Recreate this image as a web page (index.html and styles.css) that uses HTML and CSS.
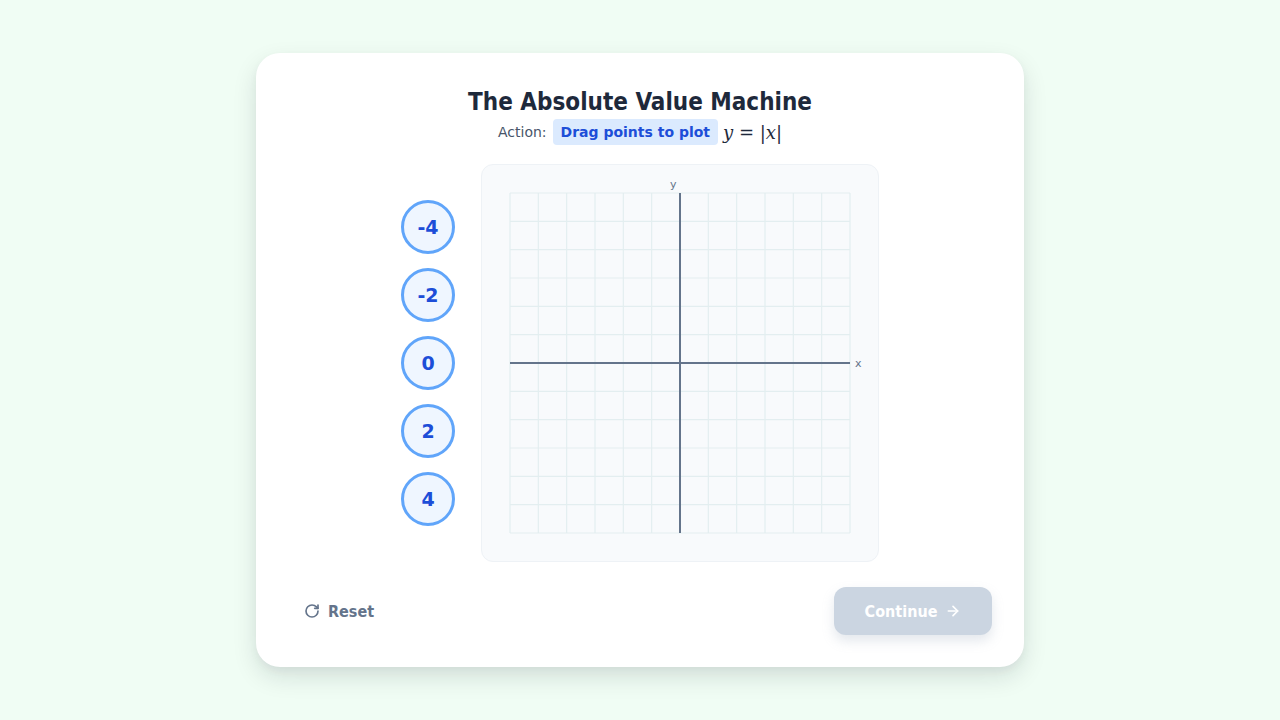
FILE: index.html
```html
<!DOCTYPE html>
<html>
<head>
<meta charset="utf-8">
<link rel="stylesheet" href="styles.css">
</head>
<body>
<div class="page">
  <div class="card">
    <h1 class="title">The Absolute Value Machine</h1>
    <div class="subtitle">
      <span class="action-label">Action:</span>
      <span class="badge">Drag points to plot</span>
      <span class="math"><i>y</i> = |<i>x</i>|</span>
    </div>
    <div class="main">
      <div class="points">
        <div class="point">-4</div>
        <div class="point">-2</div>
        <div class="point">0</div>
        <div class="point">2</div>
        <div class="point">4</div>
      </div>
      <div class="graph">
        <svg width="396" height="396" viewBox="0 0 396 396">
          <g stroke="#e3eef0" stroke-width="1.2">
            <line x1="28" y1="28" x2="28" y2="368"/>
            <line x1="56.33" y1="28" x2="56.33" y2="368"/>
            <line x1="84.67" y1="28" x2="84.67" y2="368"/>
            <line x1="113" y1="28" x2="113" y2="368"/>
            <line x1="141.33" y1="28" x2="141.33" y2="368"/>
            <line x1="169.67" y1="28" x2="169.67" y2="368"/>
            <line x1="226.33" y1="28" x2="226.33" y2="368"/>
            <line x1="254.67" y1="28" x2="254.67" y2="368"/>
            <line x1="283" y1="28" x2="283" y2="368"/>
            <line x1="311.33" y1="28" x2="311.33" y2="368"/>
            <line x1="339.67" y1="28" x2="339.67" y2="368"/>
            <line x1="368" y1="28" x2="368" y2="368"/>
            <line x1="28" y1="28" x2="368" y2="28"/>
            <line x1="28" y1="56.33" x2="368" y2="56.33"/>
            <line x1="28" y1="84.67" x2="368" y2="84.67"/>
            <line x1="28" y1="113" x2="368" y2="113"/>
            <line x1="28" y1="141.33" x2="368" y2="141.33"/>
            <line x1="28" y1="169.67" x2="368" y2="169.67"/>
            <line x1="28" y1="226.33" x2="368" y2="226.33"/>
            <line x1="28" y1="254.67" x2="368" y2="254.67"/>
            <line x1="28" y1="283" x2="368" y2="283"/>
            <line x1="28" y1="311.33" x2="368" y2="311.33"/>
            <line x1="28" y1="339.67" x2="368" y2="339.67"/>
            <line x1="28" y1="368" x2="368" y2="368"/>
          </g>
          <g stroke="#64748b" stroke-width="2">
            <line x1="198" y1="28" x2="198" y2="368"/>
            <line x1="28" y1="198" x2="368" y2="198"/>
          </g>
          <text x="188" y="23" class="axis-label">y</text>
          <text x="373" y="202" class="axis-label">x</text>
        </svg>
      </div>
    </div>
    <div class="footer">
      <button class="reset">
        <svg width="16" height="16" viewBox="0 0 24 24" fill="none" stroke="currentColor" stroke-width="2.5" stroke-linecap="round" stroke-linejoin="round"><path d="M21 12a9 9 0 1 1-9-9c2.52 0 4.93 1 6.74 2.74L21 8"/><path d="M21 3v5h-5"/></svg>
        <span>Reset</span>
      </button>
      <button class="continue">
        <span>Continue</span>
        <svg width="16" height="16" viewBox="0 0 24 24" fill="none" stroke="currentColor" stroke-width="2.5" stroke-linecap="round" stroke-linejoin="round"><path d="M5 12h14"/><path d="m12 5 7 7-7 7"/></svg>
      </button>
    </div>
  </div>
</div>
</body>
</html>
```
FILE: styles.css
```css
* { box-sizing: border-box; }
html, body { margin: 0; padding: 0; }
body {
  background: #f0fdf4;
  font-family: "DejaVu Sans", Verdana, sans-serif;
  width: 1280px;
  height: 720px;
  overflow: hidden;
}
.page {
  height: 720px;
  display: flex;
  align-items: center;
  justify-content: center;
}
.card {
  width: 768px;
  height: 614px;
  background: #ffffff;
  border-radius: 24px;
  box-shadow: 0 10px 25px rgba(15, 23, 42, 0.12), 0 4px 8px rgba(15, 23, 42, 0.04);
  padding: 32px;
  display: flex;
  flex-direction: column;
  align-items: center;
}
.title {
  margin: 0;
  padding-top: 2px;
  font-family: "DejaVu Sans Condensed", "DejaVu Sans", sans-serif;
  font-stretch: condensed;
  font-size: 24px;
  line-height: 30px;
  font-weight: bold;
  color: #1e293b;
}
.subtitle {
  margin-top: 2px;
  height: 26px;
  display: flex;
  align-items: center;
  gap: 6px;
  font-size: 14px;
  color: #475569;
}
.badge {
  background: #dbeafe;
  color: #1d4ed8;
  font-weight: bold;
  padding: 0 8px;
  height: 26px;
  line-height: 26px;
  border-radius: 4px;
}
.math {
  font-family: "DejaVu Serif", "Liberation Serif", serif;
  font-size: 18px;
  color: #1e293b;
  margin-left: -1px;
}
.math i { font-style: italic; }
.main {
  margin-top: 19px;
  display: flex;
  align-items: center;
  gap: 26px;
}
.points {
  display: flex;
  flex-direction: column;
  gap: 14px;
}
.point {
  width: 54px;
  height: 54px;
  border-radius: 50%;
  border: 3px solid #60a5fa;
  background: #eff6ff;
  color: #1d4ed8;
  font-weight: bold;
  font-size: 19px;
  display: flex;
  align-items: center;
  justify-content: center;
}
.graph {
  width: 398px;
  height: 398px;
  background: #f8fafc;
  border: 1px solid #eef2f6;
  border-radius: 12px;
}
.graph svg { display: block; }
.axis-label {
  font-family: "DejaVu Sans", sans-serif;
  font-size: 11px;
  fill: #64748b;
}
.footer {
  margin-top: 25px;
  width: 100%;
  display: flex;
  justify-content: space-between;
  align-items: center;
}
button {
  font-family: "DejaVu Sans Condensed", "DejaVu Sans", sans-serif;
  font-stretch: condensed;
  border: none;
  cursor: pointer;
}
.reset {
  background: transparent;
  color: #64748b;
  font-weight: bold;
  font-size: 16px;
  display: flex;
  align-items: center;
  gap: 8px;
  padding: 8px 16px;
  height: 48px;
}
.continue {
  width: 158px;
  height: 48px;
  border-radius: 12px;
  background: #cbd5e1;
  color: #ffffff;
  font-weight: bold;
  font-size: 16px;
  display: flex;
  align-items: center;
  justify-content: center;
  gap: 8px;
  box-shadow: 0 6px 12px rgba(148, 163, 184, 0.25);
}
```
